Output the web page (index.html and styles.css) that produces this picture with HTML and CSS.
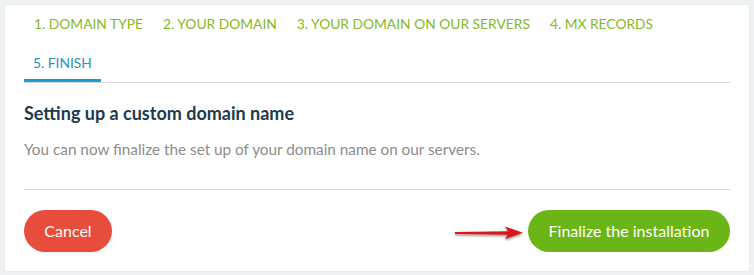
FILE: index.html
```html
<!DOCTYPE html>
<html lang="en">
<head>
  <meta charset="UTF-8">
  <title>Custom domain</title>
  <link rel="stylesheet" href="styles.css">
</head>
<body>
  <!-- Wizard card -->
  <div class="wizard">
    <ul class="steps">
      <li><a href="#">1. DOMAIN TYPE</a></li>
      <li><a href="#">2. YOUR DOMAIN</a></li>
      <li><a href="#">3. YOUR DOMAIN ON OUR SERVERS</a></li>
      <li><a href="#">4. MX RECORDS</a></li>
      <li><a href="#" class="active">5. FINISH</a></li>
    </ul>

    <div class="step-body">
      <h2>Setting up a custom domain name</h2>
      <p>You can now finalize the set up of your domain name on our servers.</p>
    </div>

    <div class="step-footer">
      <a href="#" class="btn btn-cancel">Cancel</a>
      <div class="finish-group">
        <svg class="arrow" width="72" height="16" viewBox="0 0 72 16">
          <defs>
            <filter id="shadow" x="-10%" y="-50%" width="120%" height="200%">
              <feDropShadow dx="0" dy="1.5" stdDeviation="1" flood-color="#000" flood-opacity="0.45"/>
            </filter>
          </defs>
          <g filter="url(#shadow)">
            <path d="M2 7 L56 6.2 L56 9.8 L2 9 Z" fill="#d8161b"/>
            <path d="M52 1.5 L70 7.8 L52 14 L56 7.8 Z" fill="#d8161b"/>
          </g>
        </svg>
        <a href="#" class="btn btn-finish">Finalize the installation</a>
      </div>
    </div>
  </div>
</body>
</html>
```

FILE: styles.css
```css
/* ====== RESET ====== */
* {
  margin: 0;
  padding: 0;
  box-sizing: border-box;
}
ul {
  list-style: none;
}

body {
  font-family: Lato, "Open Sans", sans-serif;
  background-color: #eef2f2;
  padding: 4px;
}

/* ====== CARD ====== */
.wizard {
  background-color: #fff;
  border: 1px solid #e6ebeb;
  height: 268px;
  padding: 0 19px;
}

/* ====== STEP TABS ====== */
.steps {
  display: flex;
  flex-wrap: wrap;
  border-bottom: 1px solid #dcdcdc;
  margin-top: -1px;
}
.steps li a {
  display: block;
  padding: 9px 10px 9px 10px;
  line-height: 21px;
  font-size: 13.8px;
  color: #86b827;
  text-decoration: none;
  border-bottom: 3px solid transparent;
  height: 39px;
}
.steps li a.active {
  color: #2f8fbf;
  border-bottom-color: #1c9ad3;
  padding-left: 9px;
  padding-right: 9px;
}

/* ====== BODY ====== */
.step-body {
  padding-top: 18px;
  padding-bottom: 30px;
  border-bottom: 1px solid #dcdcdc;
}
.step-body h2 {
  font-size: 18px;
  font-weight: 700;
  color: #1b3a4e;
  line-height: 24px;
}
.step-body p {
  margin-top: 14px;
  font-size: 15.3px;
  color: #8c8c8c;
  line-height: 20px;
}

/* ====== FOOTER / BUTTONS ====== */
.step-footer {
  display: flex;
  justify-content: space-between;
  align-items: center;
  padding-top: 20px;
}
.finish-group {
  display: flex;
  align-items: center;
  gap: 3px;
}
.arrow {
  margin-top: 4px;
}
.btn {
  display: inline-block;
  height: 42px;
  line-height: 42px;
  border-radius: 21px;
  font-size: 16px;
  color: #fff;
  text-decoration: none;
  text-align: center;
}
.btn-cancel {
  width: 88px;
  background-color: #e84c3d;
}
.btn-finish {
  width: 202px;
  background-color: #6cb516;
}
```
